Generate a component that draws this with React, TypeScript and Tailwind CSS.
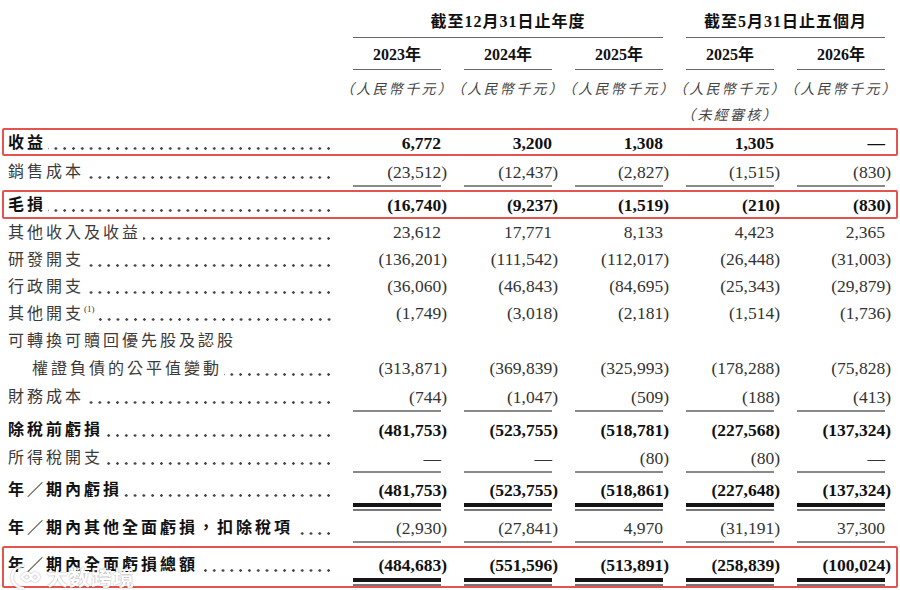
import React from "react";

type Line = "none" | "single" | "double";

interface Row {
  label: string;
  sup?: string;
  vals?: string[];
  bold?: boolean;
  boldLabel?: boolean;
  box?: boolean;
  line?: Line;
  indent?: boolean;
  dots?: boolean;
  cls: string;
}

const ROWS: Row[] = [
  { label: "收益", bold: true, box: true, cls: "h-[28px]", vals: ["6,772", "3,200", "1,308", "1,305", "—"] },
  { label: "銷售成本", line: "single", cls: "h-[30px] pt-[3px]", vals: ["(23,512)", "(12,437)", "(2,827)", "(1,515)", "(830)"] },
  { label: "毛損", bold: true, box: true, cls: "mt-[4px] h-[29px]", vals: ["(16,740)", "(9,237)", "(1,519)", "(210)", "(830)"] },
  { label: "其他收入及收益", cls: "h-[27px]", vals: ["23,612", "17,771", "8,133", "4,423", "2,365"] },
  { label: "研發開支", cls: "h-[27px]", vals: ["(136,201)", "(111,542)", "(112,017)", "(26,448)", "(31,003)"] },
  { label: "行政開支", cls: "h-[27px]", vals: ["(36,060)", "(46,843)", "(84,695)", "(25,343)", "(29,879)"] },
  { label: "其他開支", sup: "(1)", cls: "h-[27px]", vals: ["(1,749)", "(3,018)", "(2,181)", "(1,514)", "(1,736)"] },
  { label: "可轉換可贖回優先股及認股", dots: false, cls: "h-[28px]" },
  { label: "權證負債的公平值變動", indent: true, cls: "h-[27px]", vals: ["(313,871)", "(369,839)", "(325,993)", "(178,288)", "(75,828)"] },
  { label: "財務成本", line: "single", cls: "h-[29px] pt-[2px]", vals: ["(744)", "(1,047)", "(509)", "(188)", "(413)"] },
  { label: "除稅前虧損", bold: true, cls: "h-[34px] pt-[4px]", vals: ["(481,753)", "(523,755)", "(518,781)", "(227,568)", "(137,324)"] },
  { label: "所得稅開支", line: "single", cls: "h-[27px]", vals: ["—", "—", "(80)", "(80)", "—"] },
  { label: "年／期內虧損", bold: true, line: "double", cls: "h-[37px] pt-[5px]", vals: ["(481,753)", "(523,755)", "(518,861)", "(227,648)", "(137,324)"] },
  { label: "年／期內其他全面虧損，扣除稅項", boldLabel: true, line: "single", cls: "h-[34px] pt-[6px]", vals: ["(2,930)", "(27,841)", "4,970", "(31,191)", "37,300"] },
  { label: "年／期內全面虧損總額", bold: true, box: true, line: "double", cls: "mt-[3px] h-[42px] pt-[4px] pb-[5px]", vals: ["(484,683)", "(551,596)", "(513,891)", "(258,839)", "(100,024)"] },
];

const GRID = "grid grid-cols-[322px_repeat(5,88px)] gap-x-[23px]";
const FONT = "font-['Liberation_Serif','Noto_Sans_CJK_TC',serif]";

function Num({ v }: { v: string }) {
  if (v.endsWith(")")) {
    return (
      <span>
        {v.slice(0, -1)}
        <span className="-mr-[6px]">)</span>
      </span>
    );
  }
  return <span>{v}</span>;
}

function ValueCell({ v, bold, line }: { v: string; bold?: boolean; line: Line }) {
  const text = bold ? "font-bold text-[#111]" : "text-[#333]";
  if (line === "double") {
    return (
      <div className="flex flex-col">
        <div className={`flex flex-1 items-center justify-end text-[17.5px] ${text}`}>
          <Num v={v} />
        </div>
        <div className="h-[4px] bg-[#151515]" />
        <div className="mt-[2px] h-[2px] bg-[#777]" />
      </div>
    );
  }
  return (
    <div
      className={`flex items-center justify-end text-[17.5px] ${text} ${
        line === "single" ? "border-b-2 border-[#8a8a8a]" : ""
      }`}
    >
      <Num v={v} />
    </div>
  );
}

function TableRow({ row }: { row: Row }) {
  const line = row.line ?? "none";
  const boldLabel = row.bold || row.boldLabel;
  const labelPad = line === "double" ? "pb-[8px]" : line === "single" ? "pb-[2px]" : "";
  return (
    <div
      className={`${GRID} mx-[2px] rounded-[2px] border-x-2 px-[4px] ${
        row.box ? "border-y-2 border-[#e25450]" : "border-transparent"
      } ${row.cls}`}
    >
      <div className={`flex items-center ${labelPad}`}>
        <span
          className={`whitespace-nowrap text-[16px] tracking-[3px] ${row.indent ? "pl-[24px]" : ""} ${
            boldLabel ? "font-bold text-[#111]" : "text-[#3a3a3a]"
          }`}
        >
          {row.label}
          {row.sup && (
            <sup className="relative -top-[7px] text-[9px] tracking-normal">{row.sup}</sup>
          )}
        </span>
        {row.dots !== false && (
          <span className="-mr-[3px] ml-[2px] mt-[11px] h-[3px] flex-1 bg-[radial-gradient(circle,#444_1.1px,transparent_1.5px)] bg-[length:8.8px_3px] bg-right bg-repeat-x" />
        )}
      </div>
      {row.vals
        ? row.vals.map((v, i) => <ValueCell key={i} v={v} bold={row.bold} line={line} />)
        : null}
    </div>
  );
}

function Watermark() {
  return (
    <div className="pointer-events-none absolute left-[9px] top-[561px] flex items-center gap-[4px] opacity-90">
      <svg width="34" height="30" viewBox="0 0 34 30" fill="none">
        <g stroke="#fff" strokeWidth="2.4" strokeLinecap="round" style={{ filter: "drop-shadow(0 0 1px rgba(0,0,0,0.35))" }}>
          <path d="M14 4 A11 11 0 1 0 14 26" />
          <path d="M13 15 c3 -5 7 -5 9 0 c2 5 6 5 8 0 c-2 -5 -6 -5 -8 0 c-2 5 -6 5 -9 0" />
        </g>
      </svg>
      <span className="font-['Noto_Sans_CJK_SC',sans-serif] text-[21px] font-bold tracking-[1px] text-white [text-shadow:0_0_2px_rgba(0,0,0,0.45)]">
        大数跨境
      </span>
    </div>
  );
}

const UNIT = "flex items-center justify-center whitespace-nowrap text-[14px] italic tracking-[2.3px] text-[#444]";

export default function App() {
  return (
    <div className={`relative h-[590px] w-[900px] overflow-hidden bg-white ${FONT}`}>
      <div className="pl-[8px]">
        <div className={`${GRID} h-[38px]`}>
          <div />
          <div className="col-span-3 flex items-center justify-center border-b-[1.5px] border-[#666] pt-[6px] text-[16px] font-bold tracking-[1px] text-[#111]">
            截至12月31日止年度
          </div>
          <div className="col-span-2 flex items-center justify-center border-b-[1.5px] border-[#666] pt-[6px] text-[16px] font-bold tracking-[1px] text-[#111]">
            截至5月31日止五個月
          </div>
        </div>
        <div className={`${GRID} h-[32px]`}>
          <div />
          {["2023年", "2024年", "2025年", "2025年", "2026年"].map((y, i) => (
            <div
              key={i}
              className="flex items-center justify-center border-b-[1.5px] border-[#666] pt-[3px] text-[16px] font-bold text-[#111]"
            >
              {y}
            </div>
          ))}
        </div>
        <div className={`${GRID} h-[32px] pt-[6px]`}>
          <div />
          {[0, 1, 2, 3, 4].map((i) => (
            <div key={i} className={UNIT}>
              （人民幣千元）
            </div>
          ))}
        </div>
        <div className={`${GRID} h-[26px]`}>
          <div className={`col-start-5 ${UNIT}`}>（未經審核）</div>
        </div>
      </div>
      <div className="flex flex-col">
        {ROWS.map((r, i) => (
          <TableRow key={i} row={r} />
        ))}
      </div>
      <Watermark />
    </div>
  );
}
